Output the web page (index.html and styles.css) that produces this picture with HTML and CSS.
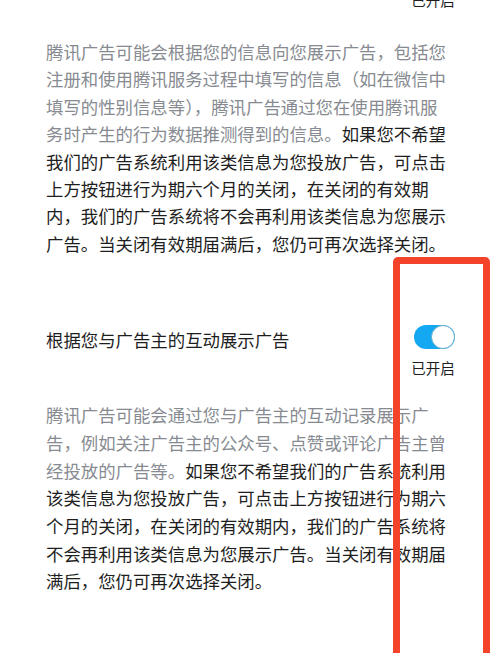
FILE: index.html
```html
<!DOCTYPE html>
<html lang="zh-CN">
<head>
<meta charset="utf-8">
<title>广告设置</title>
<link rel="stylesheet" href="styles.css">
</head>
<body>
<div class="page">
  <div class="status status-top">已开启</div>
  <p class="desc"><span class="muted">腾讯广告可能会根据您的信息向您展示广告，包括您注册和使用腾讯服务过程中填写的信息（如在微信中填写的性别信息等），腾讯广告通过您在使用腾讯服务时产生的行为数据推测得到的信息。</span>如果您不希望我们的广告系统利用该类信息为您投放广告，可点击上方按钮进行为期六个月的关闭，在关闭的有效期内，我们的广告系统将不会再利用该类信息为您展示广告。当关闭有效期届满后，您仍可再次选择关闭。</p>
  <div class="row">
    <div class="title">根据您与广告主的互动展示广告</div>
    <div class="switch-col">
      <div class="switch"><span class="knob"></span></div>
      <div class="status">已开启</div>
    </div>
  </div>
  <p class="desc desc-2"><span class="muted">腾讯广告可能会通过您与广告主的互动记录展示广告，例如关注广告主的公众号、点赞或评论广告主曾经投放的广告等。</span>如果您不希望我们的广告系统利用该类信息为您投放广告，可点击上方按钮进行为期六个月的关闭，在关闭的有效期内，我们的广告系统将不会再利用该类信息为您展示广告。当关闭有效期届满后，您仍可再次选择关闭。</p>
</div>
<div class="highlight"></div>
</body>
</html>
```
FILE: styles.css
```css
html, body {
  margin: 0;
  padding: 0;
  background: #ffffff;
  overflow: hidden;
}
body {
  font-family: "Noto Sans CJK SC", "Noto Sans", sans-serif;
  color: #1e1e1e;
  height: 653px;
  position: relative;
}
.page {
  padding: 0 45px 0 46px;
}
.status {
  font-size: 14.5px;
  line-height: 20px;
  color: #1e1e1e;
  text-align: center;
  width: 44px;
}
.status-top {
  margin-top: -10px;
  margin-left: auto;
}
.desc {
  margin: 28px 0 0 0;
  width: 23.4em;
  font-size: 17.4px;
  line-height: 27.4px;
  color: #1e1e1e;
  line-break: strict;
}
.desc-2 {
  margin-top: 23px;
  line-height: 27.7px;
}
.muted {
  color: #878b91;
}
.row {
  margin-top: 68px;
  display: flex;
  justify-content: space-between;
  align-items: flex-start;
}
.title {
  font-size: 17.4px;
  line-height: 27.5px;
  margin-top: 1px;
  color: #1e1e1e;
}
.switch-col {
  display: flex;
  flex-direction: column;
  align-items: center;
  width: 44px;
}
.switch {
  position: relative;
  width: 41px;
  height: 24px;
  border-radius: 12px;
  background: #15a8f2;
  align-self: flex-end;
}
.knob {
  position: absolute;
  right: 0;
  top: 0;
  width: 22px;
  height: 22px;
  border-radius: 50%;
  background: #ffffff;
  border: 1px solid #6aaecb;
}
.switch-col .status {
  margin-top: 9px;
}
.highlight {
  position: absolute;
  left: 393px;
  top: 257px;
  width: 97px;
  height: 420px;
  box-sizing: border-box;
  border: 7.5px solid #f4432b;
  border-radius: 5px;
}
```
